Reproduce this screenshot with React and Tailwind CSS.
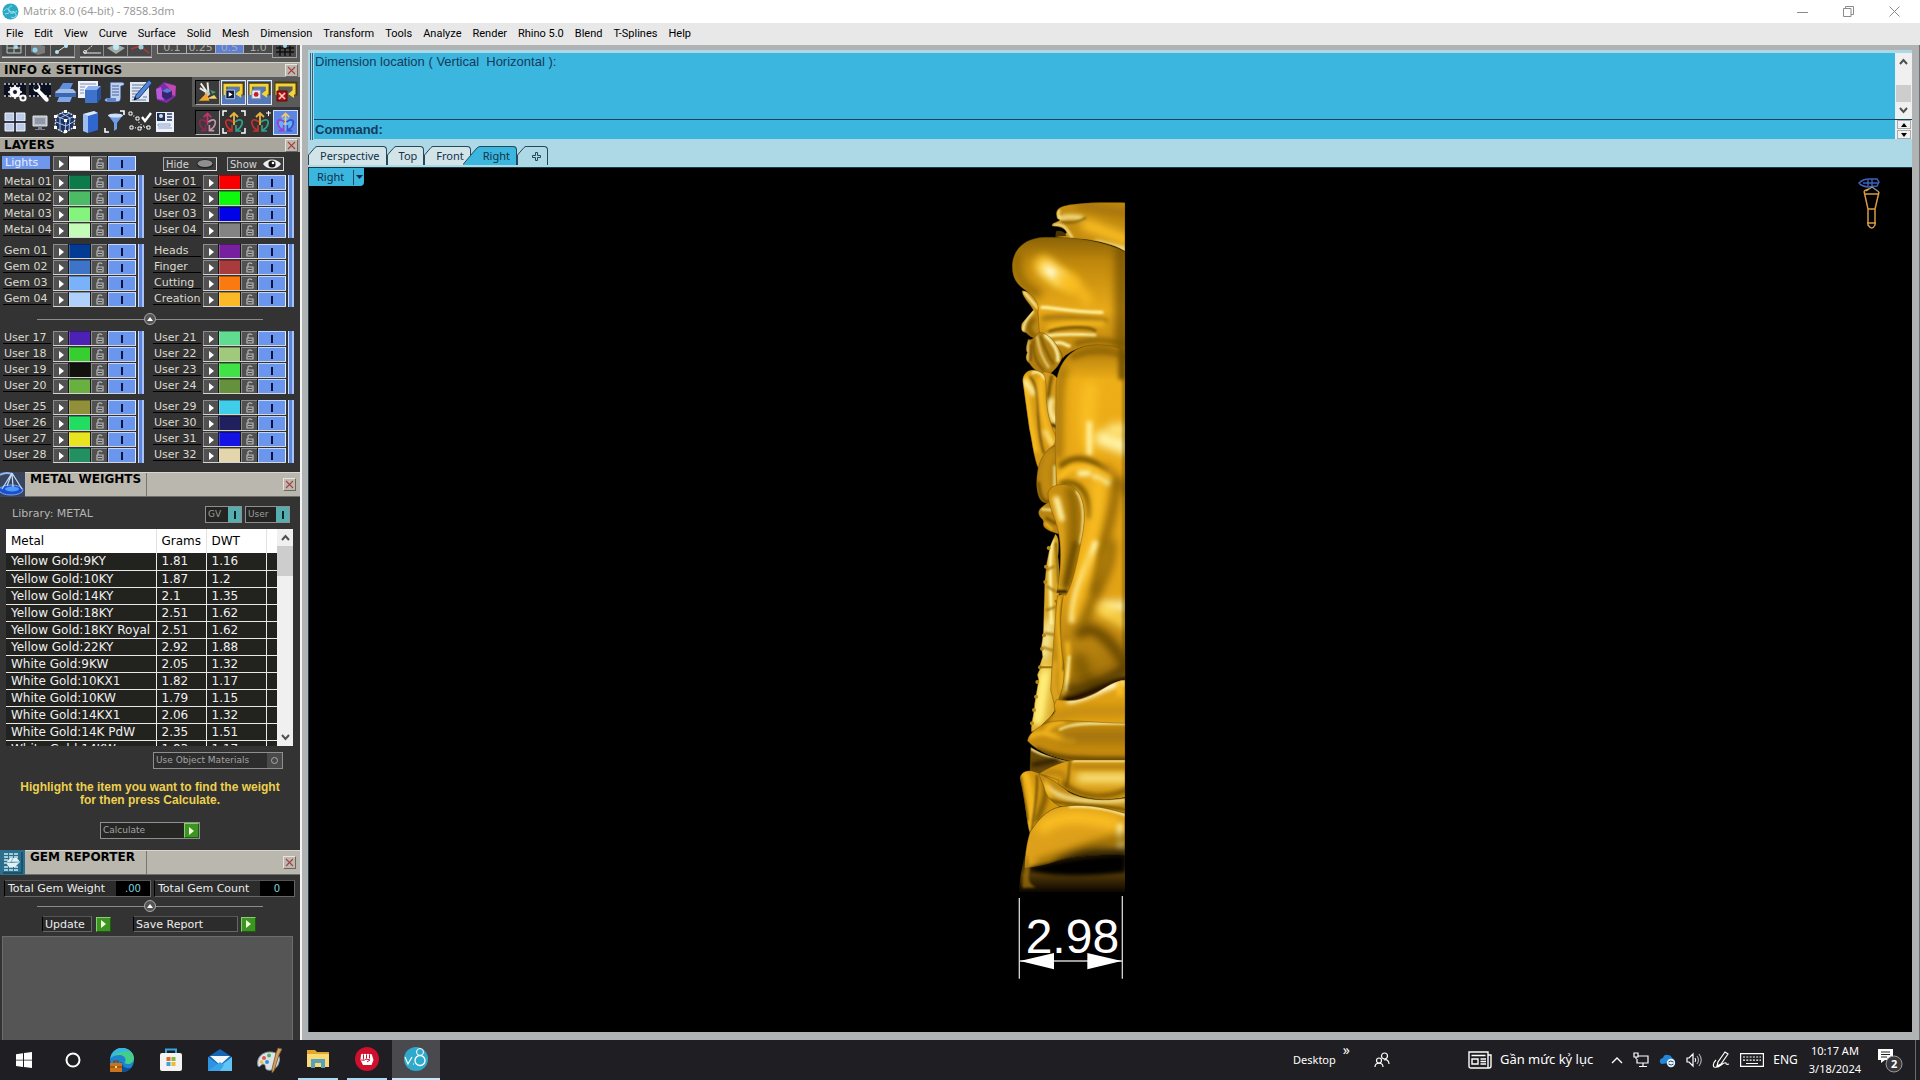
import React from "react";

const ui = "font-['DejaVu_Sans',Verdana,sans-serif]";
const segoe = "font-['Noto_Sans','Segoe_UI',sans-serif]";
const arial = "font-['Liberation_Sans',Arial,sans-serif]";

const MENU = ["File", "Edit", "View", "Curve", "Surface", "Solid", "Mesh", "Dimension", "Transform", "Tools", "Analyze", "Render", "Rhino 5.0", "Blend", "T-Splines", "Help"];

const GROUPS_TOP = [
  [["Metal 01", "#0d7a4c"], ["Metal 02", "#4cbb66"], ["Metal 03", "#84f57c"], ["Metal 04", "#c2fcb6"]],
  [["User 01", "#f80000"], ["User 02", "#0cf90c"], ["User 03", "#0202e8"], ["User 04", "#838383"]],
  [["Gem 01", "#033a94"], ["Gem 02", "#3d74c8"], ["Gem 03", "#79b2f8"], ["Gem 04", "#aed0fb"]],
  [["Heads", "#77209f"], ["Finger", "#a83c3c"], ["Cutting", "#fa7a10"], ["Creation", "#fbb829"]],
];
const GROUPS_BOTTOM = [
  [["User 17", "#4c22b4"], ["User 18", "#36cf2f"], ["User 19", "#11110d"], ["User 20", "#68b040"]],
  [["User 21", "#5fdc90"], ["User 22", "#a0c97c"], ["User 23", "#40e345"], ["User 24", "#66913c"]],
  [["User 25", "#90903a"], ["User 26", "#22dd62"], ["User 27", "#e8e422"], ["User 28", "#229060"]],
  [["User 29", "#40cdea"], ["User 30", "#20205e"], ["User 31", "#1512e4"], ["User 32", "#e4d6ac"]],
];

const METALS = [
  ["Yellow Gold:9KY", "1.81", "1.16"],
  ["Yellow Gold:10KY", "1.87", "1.2"],
  ["Yellow Gold:14KY", "2.1", "1.35"],
  ["Yellow Gold:18KY", "2.51", "1.62"],
  ["Yellow Gold:18KY Royal", "2.51", "1.62"],
  ["Yellow Gold:22KY", "2.92", "1.88"],
  ["White Gold:9KW", "2.05", "1.32"],
  ["White Gold:10KX1", "1.82", "1.17"],
  ["White Gold:10KW", "1.79", "1.15"],
  ["White Gold:14KX1", "2.06", "1.32"],
  ["White Gold:14K PdW", "2.35", "1.51"],
  ["White Gold:14KW", "1.83", "1.17"],
];

function CloseBox() {
  return (
    <button aria-label="Close panel" className="flex h-[13px] w-[13px] shrink-0 items-center justify-center border border-t-[#e8e5de] border-l-[#e8e5de] border-r-[#6a6860] border-b-[#6a6860] bg-[#bdb9b0]">
      <svg width="9" height="9" viewBox="0 0 9 9" stroke="#a84040" strokeWidth="1.1"><path d="M1 1l7 7M8 1l-7 7" /></svg>
    </button>
  );
}

function SlimHeader({ title }) {
  return (
    <div className="flex h-[15px] shrink-0 items-center justify-between border-t border-[#d6d3cb] bg-[#a9a69d] pl-1 pr-0.5">
      <h2 className="text-[12px] leading-[14px] font-bold text-black">{title}</h2>
      <CloseBox />
    </div>
  );
}

function TallHeader({ title, icon }) {
  return (
    <div className="flex h-[25px] shrink-0 bg-[#bab7ae]">
      <div className="h-full w-[25px]">{icon}</div>
      <div className="flex flex-1 items-center border-t border-b border-t-[#d8d6ce] border-b-[#6f6e68] pr-1">
        <h2 className="h-full w-[122px] border-r border-[#77756e] pl-[5px] text-[12px] leading-[13px] font-bold whitespace-nowrap text-black">{title}</h2>
        <span className="ml-auto"><CloseBox /></span>
      </div>
    </div>
  );
}

const C = ({ children }) => (
  <svg width="24" height="24" viewBox="0 0 24 24" fill="none" aria-hidden="true">{children}</svg>
);

const film = (
  <>
    <path d="M1 3h22v14H1z" fill="#0b1020" />
    <path d="M1 4h22M1 16h22" stroke="#c8cde0" strokeWidth="1.6" strokeDasharray="2 2" />
  </>
);
const ARROWS = (a, b, c) => (
  <>
    <path d="M12 15V3M8 7l4-4 4 4" stroke={a} strokeWidth="1.8" />
    <path d="M11 12C6 8 3 10 4 14s3 5 5 6M10 15v6H5" stroke={b} strokeWidth="1.7" />
    <path d="M13 12c5-4 8-2 7 2s-3 5-5 6M14 15v6h5" stroke={c} strokeWidth="1.7" />
  </>
);
const LOOP = (
  <>
    <path d="M3 15V4h18v9h-4" stroke="#4b3a10" strokeWidth="5" />
    <path d="M3 15V5h17v8h-3" stroke="#f1d43a" strokeWidth="3" />
    <path d="M14 14l6-5v9z" fill="#f1d43a" />
  </>
);

const ICONS1 = [
  ["Render settings", <C>{film}<circle cx="12" cy="12" r="4" stroke="#fff" strokeWidth="3.2" /><path d="M12 5v14M5 12h14M7 7l10 10M17 7L7 17" stroke="#fff" strokeWidth="1.6" /><circle cx="12" cy="12" r="2" fill="#10182c" /><circle cx="20" cy="18" r="2.6" stroke="#fff" strokeWidth="2" /></C>],
  ["Options", <C>{film}<path d="M8 5c-4 2-3 7 1 7l8 9c2 2 5 0 3-3l-8-8c1-3 0-5-2-6l1 4-3 2-3-2z" fill="#fff" /></C>],
  ["Printer", <C><path d="M4 12l6-9h10l-4 9z" fill="#5f90dd" /><path d="M2 12l4-3h14l3 3-3 5H5z" fill="#9fbbe8" /><path d="M2 13h21v4H2z" fill="#3d65b0" /><path d="M6 17h13l-2 5H4z" fill="#7fa6e6" /></C>],
  ["Object info", <C><path d="M0 1h20v17H0z" fill="#eef2fa" /><path d="M2 4h16M2 7h5M2 10h4M2 13h4" stroke="#7f8fb4" /><path d="M7 10l4-4h12v12l-4 5H7z" fill="#3e73cc" /><path d="M7 10l4-4h12l-4 4z" fill="#8cb1ee" /><path d="M19 10l4-4v12l-4 5z" fill="#27509d" /></C>],
  ["Notes", <C><path d="M7 2h12c3 0 3 4 0 4h-1v12c0 3-2 4-4 4H4c-3 0-3-4 0-4h3z" fill="#bfd0ee" stroke="#253a66" /><path d="M9 6h7M9 9h7M9 12h7M9 15h7" stroke="#44609c" /><path d="M3 18h10v3H4z" fill="#5b86cf" /></C>],
  ["Edit notes", <C><path d="M2 2h19v20H2z" fill="#dfe8f6" /><path d="M4 5h14M4 8h9M4 11h8M4 14h5M4 17h4M15 17h4M4 20h14" stroke="#6a7896" strokeWidth="1.2" /><path d="M21 0l3 3-13 15-5 2 2-5z" fill="#4f86da" stroke="#1e3a72" /><path d="M6 20l1-3 2 2z" fill="#111" /></C>],
  ["Gem tools", <C><path d="M3 9l8-7 11 3 1 11-9 7-10-3z" fill="#7d2ba8" /><path d="M3 9l5-2 3 13-7-1z" fill="#b55bd8" /><path d="M11 3l5 5-1 5 7 3 1-10z" fill="#c04aae" /><path d="M9 11l5-3 5 3v6l-6 3-4-3z" fill="#37266e" /><path d="M9 11l5-3 5 3-5 2z" fill="#5c7ad8" /></C>],
];
const ICONS2 = [
  ["Viewport layout", <C><path d="M2 3h9v8H2zM13 3h9v8h-9zM2 13h9v8H2zM13 13h9v8h-9z" fill="#bccbe8" stroke="#f1f4fb" /><path d="M12 2v21M1 12h22" stroke="#1c2230" strokeWidth="1.4" /></C>],
  ["Screen", <C><path d="M5 6h14v10H5z" fill="#b7bcc6" stroke="#dfe2e8" /><path d="M7 8h10v6H7z" fill="#8f97a8" /><path d="M10 16h4v3h-4zM7 19h10v1H7z" fill="#7c8190" /></C>],
  ["Mesh cube", <C><path d="M12 1l10 5-1 11-9 6-10-5 1-12z" fill="#1d315f" stroke="#d3ddf3" strokeWidth="1.3" strokeDasharray="2 1" /><path d="M3 6l10 4 9-4M13 10l-1 13M3 12l10 4 9-5M8 3l9 5-1 12M17 3L7 8v13" stroke="#a9c0ee" /><path d="M11 0h3v3h-3zM1 5h3v3H1zM20 5h3v3h-3zM11 20h3v3h-3zM1 16h3v3H1zM20 16h3v3h-3zM11 9h3v3h-3z" fill="#fff" /></C>],
  ["Library", <C><path d="M5 4l11-3 4 2v17l-10 3-5-2z" fill="#2f66d0" /><path d="M5 4l5 2v17l-5-2z" fill="#9cbcf2" /><path d="M5 4l11-3 4 2-10 3z" fill="#dbe6fa" /></C>],
  ["Filter", <C><path d="M5 5h15l-6 8v6l-3 2v-8z" fill="#6f9ee4" /><ellipse cx="12.500" cy="5.500" rx="7.500" ry="2" fill="#cfe0fa" /><path d="M21 5V1h-4M2 18v4h4" stroke="#fff" strokeWidth="1.6" /></C>],
  ["Snap points", <C><path d="M3 4l7 5M4 18l16-1M10 9c0 4 4 7 9 8" stroke="#fff" strokeDasharray="1 2" strokeWidth="1.2" /><path d="M1 2h3v3H1zM8 7h3v3H8zM2 16h3v3H2zM10 17h3v3h-3zM19 16h3v3h-3z" fill="#222" stroke="#fff" /><path d="M14 7l3 4 6-8" stroke="#fff" strokeWidth="2.400" /></C>],
  ["Report", <C><path d="M3 2h18v20H3z" fill="#edf2fa" /><path d="M4 3h8v8H4z" fill="#203055" /><circle cx="8" cy="6" r="2" fill="#cfdaf0" /><path d="M14 4h5M14 7h5M14 10h5" stroke="#2d3d66" strokeWidth="1.500" /><path d="M5 14h12v2H5zM5 18h14" stroke="#8ea4cc" /></C>],
];
const PRESS1 = [
  ["Clean up", "border border-t-black border-l-black border-r-[#aaa] border-b-[#aaa] bg-[#3b3b3b]", <C><path d="M5 3l7 10M12 2l1 10M4 8l8 5" stroke="#ecebe6" strokeWidth="2" /><path d="M12 9l3 5-3 3-3-3z" fill="#c9c9c9" /><path d="M3 21l8-8 3 8z" fill="#f2a72c" /><path d="M11 19h11l-3-4z" fill="#f7d068" /><path d="M15 10l6 2-4 2z" fill="#3ea06a" /></C>],
  ["Play loop", "border border-[#e3ebfb] bg-[#5478b8]", <C>{LOOP}<path d="M4 10h9v9H4z" fill="#0f1a30" stroke="#b9cdf0" /><path d="M7 12l4 2.500-4 2.500z" fill="#fff" /></C>],
  ["Record loop", "border border-[#e3ebfb] bg-[#5478b8]", <C>{LOOP}<path d="M4 10h9v9H4z" fill="#e8eaf0" stroke="#8595b5" /><circle cx="8.500" cy="14.500" r="2.500" fill="#c61d2c" /></C>],
  ["Stop loop", "", <C>{LOOP}<path d="M3 11h10v10H3z" fill="#b21212" stroke="#5a0808" /><path d="M5 13l6 6M11 13l-6 6" stroke="#f7d0c8" strokeWidth="1.600" /></C>],
];
const PRESS2 = [
  ["Move", "border border-t-black border-l-black border-r-[#bbb] border-b-[#bbb] bg-[#3b3b3b]", <C>{ARROWS("#c6326f", "#8e2554", "#c895ac")}</C>],
  ["Move all axes", "", <C>{ARROWS("#e7b43e", "#c82f2f", "#31a08a")}<path d="M1 6V1h4M19 1h4v5M1 18v5h4M19 23h4v-5" stroke="#fff" strokeWidth="1.500" /></C>],
  ["Scale axes", "", <C>{ARROWS("#e7b43e", "#c82f2f", "#31a08a")}<path d="M18 3h5M20.500 1v5" stroke="#fff" /></C>],
  ["Rotate axes", "border border-[#cfe0fb] bg-[#5d86e2]", <C><circle cx="12" cy="14" r="7" fill="#64b4f2" />{ARROWS("#f3c970", "#a23ad0", "#3b4fd0")}</C>],
];

function IconButton({ label, cls, children }) {
  return (
    <button aria-label={label} className={"flex h-[25px] w-[25px] items-center justify-center " + (cls || "")}>{children}</button>
  );
}

function TopStrip() {
  const cell = "flex h-full flex-1 items-end justify-center border-r border-b border-[#8c8c8c] bg-[#484848]";
  return (
    <div className="flex h-[17px] shrink-0 bg-[#5a5a5a] pb-[4px]">
      <div className="ml-0.5 flex w-[73px] border-b border-[#ccc]">
        <button aria-label="Grid snap" className={cell}><svg width="18" height="12" viewBox="0 0 18 12" stroke="#b8c7c7" fill="none"><path d="M2 0v9h14V0M2 4h14M9 0v9" /><circle cx="11" cy="3" r="2" fill="#9fe0f4" stroke="none" /></svg></button>
        <button aria-label="Object snap" className={cell}><svg width="18" height="12" viewBox="0 0 18 12"><path d="M2 1l6-1 8 2v7l-7 2-7-3z" fill="#7a7a7a" /><circle cx="6" cy="6" r="2.500" fill="#8ad4ee" /></svg></button>
        <button aria-label="End snap" className={cell}><svg width="18" height="12" viewBox="0 0 18 12"><path d="M4 8L14 1" stroke="#ddd" /><circle cx="4" cy="8" r="2" fill="#aee4f4" /><circle cx="13" cy="2" r="2" fill="#aee4f4" /></svg></button>
      </div>
      <div className="ml-[5px] flex w-[72px] border-b border-[#ccc]">
        <button aria-label="Angle snap" className={cell}><svg width="20" height="12" viewBox="0 0 20 12" stroke="#e8e8e8" fill="none"><path d="M2 9L12 0" strokeDasharray="2 1" /><path d="M3 9h16" /><circle cx="3" cy="8" r="1.500" /></svg></button>
        <button aria-label="Plane snap" className={cell}><svg width="20" height="12" viewBox="0 0 20 12"><path d="M1 4l9-4 9 4-9 6z" fill="#a4aaa4" /><circle cx="10" cy="3" r="3" fill="#b9ecfa" /></svg></button>
        <button aria-label="Curve snap" className={cell}><svg width="20" height="12" viewBox="0 0 20 12"><path d="M1 5l9-3 9 7" stroke="#bb3b30" strokeWidth="1.500" fill="none" /><circle cx="11" cy="3" r="2.500" fill="#9bd0e4" /></svg></button>
      </div>
      <div className="ml-[5px] flex w-[115px] text-[11px] text-[#a9a9a9]">
        {["0.1", "0.25", "0.5", "1.0"].map((v) => (
          <button key={v} className={"flex h-[9px] flex-1 items-end justify-center overflow-hidden border-b border-l border-[#b0b0b0] leading-[11px] " + (v === "0.5" ? "bg-[#5d80d6]" : "bg-[#4a4a4a]")}>{v}</button>
        ))}
      </div>
      <button aria-label="Grid" className="flex w-[25px] items-end justify-center border border-t-0 border-[#a0a0a0] bg-[#4a4a4a]">
        <svg width="20" height="12" viewBox="0 0 20 12" stroke="#111" strokeWidth="1.500" fill="none"><path d="M1 3h18M1 7h18M5 1v10M10 1v10M15 1v10" /><circle cx="10" cy="1" r="2" fill="#9ad4ea" stroke="none" /></svg>
      </button>
    </div>
  );
}

const bevel = "border border-t-[#a9a9a9] border-l-[#a9a9a9] border-r-[#d9d9d9] border-b-[#e6e6e6]";

function RowButtons({ name, color }) {
  return (
    <div className="flex h-[15px] w-[83px] border-b border-[#d5d5d5] bg-[#181818]">
      <button aria-label={name + " menu"} className="flex w-[15px] items-center justify-center border-t border-l border-[#8d8d8d] bg-[#515151]">
        <svg width="5" height="8" viewBox="0 0 5 8"><path d="M0 0l5 4-5 4z" fill="#fff" /></svg>
      </button>
      <button aria-label={name + " colour"} className="mx-px w-[21px] border-t border-l border-t-black/30 border-l-white/20" style={{ backgroundColor: color }} />
      <button aria-label={name + " lock"} className="flex w-[16px] items-center justify-center border-t border-l border-[#8d8d8d] bg-[#515151]">
        <svg width="8" height="11" viewBox="0 0 8 11" fill="none" stroke="#b9b9b9" strokeWidth="1.200"><path d="M2 5V2c0-1.500 3.500-1.500 4 0M1 5h6v5H1zM2 7.500h4" /></svg>
      </button>
      <button aria-label={name + " visible"} className="ml-px flex flex-1 items-center justify-center border border-b-0 border-l-[#a8c0f6] border-t-[#c5d6fb] border-r-[#e5ecfd] bg-[#6a96ee]">
        <span className="h-2 w-0.5 bg-[#0b1440]" />
      </button>
    </div>
  );
}

function Group({ rows }) {
  return (
    <div className="flex w-[150px]">
      <div className="flex flex-col gap-px">
        {rows.map(([n, c]) => (
          <div key={n} className="flex h-[15px] items-start">
            <span className="ml-[3px] h-[13px] w-[48px] border-b border-black pl-px text-[11px] leading-[13px] whitespace-nowrap text-[#dcd9ce]">{n}</span>
            <span className="ml-[2px]"><RowButtons name={n} color={c} /></span>
          </div>
        ))}
      </div>
      <span className="ml-[2px] w-[6px] border-r-2 border-l border-r-[#a9c1f6] border-l-[#cfdcfb] bg-[#5c86dc]" />
    </div>
  );
}

function Divider() {
  return (
    <div className="flex h-[12px] items-center px-[37px]">
      <span className="h-px flex-1 bg-[#8b8b8b]" />
      <button aria-label="Collapse" className="flex h-[12px] w-[12px] items-center justify-center rounded-full border border-[#a9a9a9] bg-[#555]">
        <svg width="6" height="4" viewBox="0 0 6 4"><path d="M0 4l3-4 3 4z" fill="#fff" /></svg>
      </button>
      <span className="h-px flex-1 bg-[#8b8b8b]" />
    </div>
  );
}

function Go({ label, text }) {
  return (
    <button aria-label={label} className="flex items-center">
      {text}
      <span className="flex h-[15px] w-[15px] items-center justify-center border border-t-[#86cf6c] border-l-[#86cf6c] border-r-[#1e5d10] border-b-[#1e5d10] bg-[#3d9423]">
        <svg width="5" height="8" viewBox="0 0 5 8"><path d="M0 0l5 4-5 4z" fill="#f2ffd8" /></svg>
      </span>
    </button>
  );
}

const Chevron = ({ up }) => (
  <svg width="9" height="7" viewBox="0 0 9 7" fill="none" stroke="#505050" strokeWidth="2">{up ? <path d="M1 6l3.500-4 3.500 4" /> : <path d="M1 1l3.500 4 3.500-4" />}</svg>
);

function MetalWeights() {
  return (
    <>
      <div className="mt-[8px] flex h-[19px] items-center pr-[10px] pl-3">
        <span className="text-[11px] text-[#b5b5b5]">Library: METAL</span>
        {["GV", "User"].map((t) => (
          <button key={t} className={"flex h-[17px] items-center justify-between border border-[#8f8f8f] bg-[#242422] pl-0.5 text-[9px] text-[#9d9d9d] " + (t === "GV" ? "ml-auto w-[37px]" : "ml-[3px] w-[45px]")}>
            {t}
            <span className="flex h-[15px] w-[13px] items-center justify-center bg-[#57aeb0]"><span className="h-2 w-0.5 bg-[#07292b]" /></span>
          </button>
        ))}
      </div>
      <div className="mt-[5px] mr-[7px] ml-1.5 flex h-[217px] shrink-0 overflow-hidden">
        <div className="flex-1 overflow-hidden">
          <table className="w-full table-fixed border-collapse text-left text-[12px]">
            <colgroup><col className="w-[150px]" /><col className="w-[50px]" /><col className="w-[60px]" /><col /></colgroup>
            <thead>
              <tr className="h-[24px] bg-white text-black">
                {["Metal", "Grams", "DWT", ""].map((h, i) => (
                  <th key={i} className="border-r border-[#e2e2e2] p-0 pl-[5px] font-normal last:border-r-0">{h}</th>
                ))}
              </tr>
            </thead>
            <tbody>
              {METALS.map((r) => (
                <tr key={r[0]} className="h-[17px] bg-[#22221e] text-[#f0f0f0]">
                  {[...r, ""].map((c, i) => (
                    <td key={i} className="border-r border-b border-[#e9e9e9] p-0 pl-[5px] leading-4 whitespace-nowrap last:border-r-0">{c}</td>
                  ))}
                </tr>
              ))}
            </tbody>
          </table>
        </div>
        <div className="flex w-[16px] flex-col items-center bg-[#f0f0f0]">
          <button aria-label="Scroll up" className="flex h-[17px] items-center"><Chevron up /></button>
          <span className="h-[30px] w-full bg-[#cdcdcd]" />
          <button aria-label="Scroll down" className="mt-auto flex h-[17px] items-center"><Chevron /></button>
        </div>
      </div>
      <div className="mt-[6px] mr-[17px] flex justify-end">
        <button className="flex h-[17px] w-[130px] items-center justify-between border border-[#8f8f8f] bg-[#2d2d2d] pl-0.5 text-[9px] whitespace-nowrap text-[#a3a3a3]">
          Use Object Materials
          <span className="flex h-[15px] w-[15px] items-center justify-center bg-[#4a4a4a]"><span className="h-[7px] w-[7px] rounded-full border border-[#aaa]" /></span>
        </button>
      </div>
      <p className={"mt-[12px] text-center text-[12px] leading-[13px] font-bold text-[#edd04e] " + arial}>
        Highlight the item you want to find the weight<br />for then press Calculate.
      </p>
      <div className="mt-[15px] flex justify-center">
        <div className="flex h-[17px] w-[100px] items-center border border-[#8f8f8f] bg-[#262624]">
          <Go label="Calculate" text={<span className="w-[83px] pl-0.5 text-left text-[9px] text-[#a3a3a3]">Calculate</span>} />
        </div>
      </div>
    </>
  );
}

function GemReporter() {
  const box = "border border-t-[#555] border-l-black border-r-[#666] border-b-[#666] bg-[#2c2c2c] text-[#ececec] text-[11px] leading-[15px]";
  return (
    <>
      <div className="mt-[5px] flex h-[17px] gap-[3px] pr-[5px] pl-1">
        <div className={"flex flex-1 " + box}>
          <span className="flex-1 pl-[3px] whitespace-nowrap">Total Gem Weight</span>
          <output className="w-[34px] bg-black text-center text-[10px] text-[#7fd0dc]">.00</output>
        </div>
        <div className={"flex w-[141px] " + box}>
          <span className="flex-1 pl-[3px] whitespace-nowrap">Total Gem Count</span>
          <output className="w-[34px] bg-black text-center text-[10px] text-[#7fd0dc]">0</output>
        </div>
      </div>
      <div className="mt-[3px]"><Divider /></div>
      <div className="mt-[4px] flex h-[16px] gap-[22px] pl-[42px]">
        <Go label="Update" text={<span className={"mr-[4px] h-[16px] w-[50px] pl-0.5 text-left " + box}>Update</span>} />
        <Go label="Save Report" text={<span className={"mr-[3px] h-[16px] w-[105px] pl-0.5 text-left " + box}>Save Report</span>} />
      </div>
      <div className="mt-[4px] mr-[7px] ml-0.5 min-h-0 flex-1 border border-b-0 border-[#6c6c6c] bg-[#555]" />
    </>
  );
}

const metalIcon = (
  <svg width="25" height="25" viewBox="0 0 25 25" className="bg-[#39455c]">
    <path d="M0 3c5-3 9-2 12-1" stroke="#8fb6f0" strokeWidth="2" fill="none" />
    <ellipse cx="11" cy="18" rx="12" ry="5" fill="#1b4fd0" stroke="#76a6f6" />
    <ellipse cx="12" cy="17" rx="7" ry="2.500" fill="#4f9bf5" />
    <path d="M12 1L2 17M12 1l10 16M12 1l1 14M12 1L7 14" stroke="#c4dcfa" strokeWidth="1.200" fill="none" />
  </svg>
);
const gemIcon = (
  <svg width="25" height="25" viewBox="0 0 25 25" className="bg-[#2c6f8c]">
    <path d="M4 4h15M4 7h15M4 17h15M4 20h15M4 10h4M4 13h3" stroke="#cdeaf2" strokeWidth="1.500" strokeDasharray="4 1" />
    <path d="M6 13l4-5h7l3 4-5 5H9z" fill="#dff2f8" /><path d="M6 13l5-1 9 0M11 12l2-4" stroke="#88b6cc" />
    <path d="M22 2v21H3" stroke="#174a60" strokeWidth="1.500" fill="none" />
  </svg>
);

function Sidebar() {
  return (
    <aside className={"flex w-[300px] shrink-0 flex-col overflow-hidden bg-[#333] " + ui}>
      <TopStrip />
      <SlimHeader title="INFO &amp; SETTINGS" />
      <div className="flex h-[60px] shrink-0 justify-between pl-[2px]">
        <div className="flex flex-col justify-center gap-[5px]">
          {[ICONS1, ICONS2].map((set, i) => (
            <div key={i} className="flex">{set.map(([l, ic]) => <IconButton key={l} label={l}>{ic}</IconButton>)}</div>
          ))}
        </div>
        <div className="flex flex-col justify-center bg-[#474747]">
          {[PRESS1, PRESS2].map((set, i) => (
            <div key={i} className={"flex h-[30px] items-center gap-px pr-[2px] pl-[3px] " + (i ? "bg-[#333]" : "bg-[#5a5a5a]")}>{set.map(([l, k, ic]) => <IconButton key={l} label={l} cls={k}>{ic}</IconButton>)}</div>
          ))}
        </div>
      </div>
      <SlimHeader title="LAYERS" />
      <div className="mt-[4px] flex h-[16px] items-start">
        <span className="ml-0.5 h-[13px] w-[48px] bg-[#6f97ee] pl-[3px] text-[11px] leading-[13px] text-[#e8eefc]">Lights</span>
        <span className="ml-[3px]"><RowButtons name="Lights" color="#ffffff" /></span>
        <button className={"mt-px ml-[27px] flex h-[14px] w-[54px] items-center justify-between bg-[#3c3c3c] px-0.5 text-[10px] text-[#d5d5d5] " + bevel}>
          Hide<svg width="18" height="10" viewBox="0 0 18 10"><ellipse cx="9" cy="5" rx="8.500" ry="4.500" fill="#222" /><ellipse cx="9" cy="4.500" rx="7.500" ry="3.500" fill="#8f8f8f" /></svg>
        </button>
        <button className={"mt-px ml-[10px] flex h-[14px] w-[57px] items-center justify-between bg-[#3c3c3c] px-0.5 text-[10px] text-[#d5d5d5] " + bevel}>
          Show<svg width="18" height="10" viewBox="0 0 18 10"><path d="M0 5c4-6 14-6 18 0-4 6-14 6-18 0z" fill="#eee" /><circle cx="9" cy="5" r="3.600" fill="#161616" /><circle cx="10" cy="4" r="1.300" fill="#fff" /></svg>
        </button>
      </div>
      <div className="mt-[3px] flex flex-wrap gap-y-[6px]">
        {GROUPS_TOP.map((g, i) => <Group key={i} rows={g} />)}
      </div>
      <div className="mt-[6px]"><Divider /></div>
      <div className="mt-[6px] flex flex-wrap gap-y-[6px]">
        {GROUPS_BOTTOM.map((g, i) => <Group key={i} rows={g} />)}
      </div>
      <div className="mt-[9px]"><TallHeader title="METAL WEIGHTS" icon={metalIcon} /></div>
      <MetalWeights />
      <div className="mt-[11px]"><TallHeader title="GEM REPORTER" icon={gemIcon} /></div>
      <GemReporter />
    </aside>
  );
}

/* A shaded solid: an outline filled with gold, with soft light and dark strokes clipped to it. */
function Solid({ id, d, fill = "#d99b12", soft = [], line = "#5c3f04" }) {
  return (
    <g>
      <clipPath id={id}><path d={d} /></clipPath>
      <path d={d} fill={fill} />
      <g clipPath={"url(#" + id + ")"}>
        {soft.map(([p, color, w, o = 1], i) => (
          <path key={i} d={p} fill="none" stroke={color} strokeWidth={w} strokeLinecap="round" opacity={o} filter={w > 20 ? "url(#b14)" : w > 10 ? "url(#b8)" : "url(#b4)"} />
        ))}
      </g>
      <path d={d} fill="none" stroke={line} strokeWidth="2" opacity=".55" />
    </g>
  );
}

const HI = "#fff3a4";
const MID = "#f9bd22";
const LO = "#7c5806";
const DK = "#2b1d02";

function Statue() {
  return (
    <svg width="180" height="800" viewBox="0 0 540 2400" className="absolute top-[22px] left-[671px]" role="img" aria-label="Side view of half figurine with dimension">
      <defs>
        <filter id="b4" x="0" y="0" width="540" height="2400" filterUnits="userSpaceOnUse"><feGaussianBlur stdDeviation="3" /></filter>
        <filter id="b8" x="0" y="0" width="540" height="2400" filterUnits="userSpaceOnUse"><feGaussianBlur stdDeviation="6" /></filter>
        <filter id="b14" x="0" y="0" width="540" height="2400" filterUnits="userSpaceOnUse"><feGaussianBlur stdDeviation="12" /></filter>
        <linearGradient id="dome" x1="0" y1="0" x2="0" y2="1"><stop offset="0" stopColor="#8a6206" /><stop offset=".2" stopColor="#bf870c" /><stop offset=".6" stopColor="#e9aa19" /><stop offset="1" stopColor="#b07b0a" /></linearGradient>
        <linearGradient id="body" x1="0" y1="0" x2="0" y2="1"><stop offset="0" stopColor="#a87509" /><stop offset=".1" stopColor="#eeae18" /><stop offset=".7" stopColor="#e2a216" /><stop offset="1" stopColor="#8d6307" /></linearGradient>
        <linearGradient id="plinth" x1="0" y1="0" x2="0" y2="1"><stop offset="0" stopColor="#8a6108" /><stop offset=".4" stopColor="#1a1201" /><stop offset=".75" stopColor="#503705" /><stop offset="1" stopColor="#0a0700" /></linearGradient>
      </defs>

      <Solid id="s-top" fill="#c48c10" d="M230 78C225 52 248 46 290 42 340 36 400 38 435 38V184C400 160 330 146 270 146L226 142C236 132 252 138 260 128 254 112 238 110 216 108 214 98 230 98 240 90 232 88 230 84 230 78Z"
        soft={[["M300 45L440 70", "#96690a", 24, .8], ["M320 105L440 150", MID, 36], ["M350 158L440 180", HI, 14], ["M240 86C270 74 290 82 305 84", HI, 12], ["M238 62C230 74 236 80 240 84", HI, 6], ["M245 96C280 102 300 94 316 84", LO, 6], ["M222 106C250 96 262 120 276 142", HI, 7, .9]]} />
      <path d="M228 124q14 -6 28 6l2 8-32 2z" fill="#4a3406" />

      <Solid id="s-nose" fill="#c08a12" d="M126 302C150 300 175 330 182 360L184 440C168 452 150 440 138 428 122 428 122 412 126 400L160 360C150 340 128 324 126 302Z"
        soft={[["M132 306L172 352", HI, 8], ["M158 364C140 388 130 404 130 420", HI, 9], ["M160 390C140 405 146 430 165 440", LO, 14], ["M170 345L188 370", MID, 8]]} />
      <Solid id="s-dome" fill="url(#dome)" d="M97 230C97 178 135 143 195 142 280 140 370 152 435 185V486C400 464 330 460 290 478 270 486 255 496 248 506 240 470 215 448 178 430L174 366C180 340 160 318 136 300 110 284 97 262 97 230Z"
        soft={[["M425 180V480", "#6d4e05", 40, .75], ["M110 200C100 240 120 290 170 310", "#835d06", 30, .8], ["M190 225C215 250 240 268 270 280", MID, 60], ["M200 236C215 248 225 254 236 262", HI, 40], ["M208 244L222 252", "#fffbe0", 14], ["M240 262C280 290 320 310 320 330", MID, 34, .8], ["M186 352C210 350 260 366 366 367", HI, 10], ["M190 385C250 374 340 388 380 392", "#9a6d0a", 12], ["M206 414C240 396 330 400 370 400", MID, 12], ["M208 424C260 408 330 410 345 422", LO, 9], ["M196 438C250 430 300 432 345 436", HI, 9], ["M220 462C245 448 260 470 268 468", HI, 10], ["M290 460C340 445 380 450 430 460", LO, 14, .8]]} />
      <Solid id="s-beard" fill="#b27f12" d="M144 448C156 452 166 440 176 428 204 424 236 466 248 500 238 525 222 545 200 558 176 548 160 540 148 520 136 512 136 498 142 488 134 476 142 462 144 448Z"
        soft={[["M146 456L142 510", HI, 6, .8], ["M160 452C158 490 168 520 190 540", LO, 7], ["M172 440C176 480 190 510 206 532", HI, 6, .8], ["M182 440C196 480 206 500 220 520", LO, 7], ["M196 436C222 460 236 486 234 512", HI, 10], ["M152 462v50", "#51390a", 4]]} />

      <Solid id="s-behind" fill="#d4991a" d="M190 545C215 545 240 560 250 600V800H190L175 600Z"
        soft={[["M215 560C200 620 200 700 215 780", LO, 10], ["M213 632C205 655 212 680 228 694", HI, 18], ["M216 704l20 10", DK, 8]]} />
      <Solid id="s-flute" fill="#d79b16" d="M128 572C130 540 160 530 190 552 202 570 196 600 200 640 206 700 225 730 230 745 222 775 198 782 176 838 160 800 158 760 148 716Z"
        soft={[["M140 565C136 600 146 680 166 780", MID, 18], ["M136 575C140 590 156 588 158 610", HI, 16], ["M150 560C190 600 160 700 192 790", "#3e2b04", 4], ["M182 566C180 620 190 690 215 760", MID, 16], ["M158 548C175 540 188 554 194 566", HI, 8], ["M194 724L216 762", HI, 12, .8]]} />
      <Solid id="s-ball" fill="#a8780c" d="M230 765C190 775 168 826 170 886 172 926 186 946 212 938L246 900V770Z"
        soft={[["M215 790C190 820 190 860 205 910", "#cf9414", 26], ["M224 830V890", HI, 8, .8], ["M176 880C180 925 190 940 210 935", LO, 10]]} />
      <Solid id="s-fingers" fill="#b98511" d="M206 936C190 948 174 956 176 970 178 986 192 986 190 998 186 1014 206 1024 236 1032L244 960Z"
        soft={[["M186 958L216 960", HI, 6], ["M200 985L226 1000", LO, 10], ["M196 1000l20 18", MID, 6]]} />

      <Solid id="s-staff" fill="#d9a827" d="M226 1032C236 1040 238 1060 234 1100 244 1180 236 1230 230 1300 222 1370 216 1440 218 1500L226 1560 186 1616 154 1626C152 1600 162 1580 164 1540L176 1470 172 1454 182 1432 178 1430 188 1400 184 1370 190 1330 194 1180 200 1120 210 1070Z"
        soft={[["M218 1050C206 1100 212 1180 214 1300", HI, 10], ["M208 1300L190 1400", "#fff7b0", 26], ["M198 1440L176 1590", "#ffec74", 36], ["M192 1460L172 1590", "#ffee7a", 18], ["M228 1060L236 1180", LO, 6], ["M198 1140l24-10M202 1190l24 14M200 1260l30-10M196 1330l26 4M190 1372l30 10", "#9a6c0a", 6]]} />
      {[[206, 1074], [198, 1130], [196, 1176], [192, 1336], [186, 1376], [180, 1432], [172, 1476], [168, 1520], [162, 1560], [156, 1600]].map(([x, y]) => (
        <circle key={y} cx={x} cy={y} r="6" fill="#b98a1a" />
      ))}
      <path d="M180 1432l44 0M226 1230l12 24-10 10" stroke="#a0710e" strokeWidth="6" fill="none" />

      <Solid id="s-robeback" fill="#c28c12" d="M232 1216C224 1300 216 1420 212 1500 218 1530 230 1550 222 1580H435V1400L300 1200Z"
        soft={[["M240 1226C226 1310 250 1360 246 1500", MID, 12], ["M250 1226C232 1310 262 1380 250 1440", "#3a2804", 4], ["M226 1420C214 1470 220 1520 240 1540", "#e0a420", 18]]} />
      <Solid id="s-body" fill="url(#body)" d="M228 590C232 520 270 466 350 464 400 464 424 474 435 486V1472C410 1472 380 1490 350 1506 310 1528 270 1536 236 1528 252 1490 258 1440 246 1390 240 1330 240 1270 250 1216L290 1100 230 880 226 780Z"
        soft={[
          ["M425 480V560", LO, 20], ["M250 540C230 600 238 700 234 800", "#8a6107", 22, .9], ["M280 500C330 476 400 480 430 500", LO, 18, .6],
          ["M330 600C320 650 320 700 330 760", MID, 50], ["M328 700V790", HI, 16], ["M370 745L440 770", HI, 50], ["M400 720H440", "#ffe47a", 40],
          ["M244 826C280 796 330 800 374 840", LO, 18], ["M374 836L440 900", "#b17c0b", 30], ["M240 870C250 830 320 810 390 866", MID, 16],
          ["M300 850L325 850M345 860L385 880", HI, 18], ["M245 880C290 868 330 900 330 980", LO, 16], ["M410 880C400 1000 350 1090 340 1200", "#795506", 30, .75], ["M355 880C360 960 330 1060 300 1160", MID, 34],
          ["M345 1060C320 1140 280 1190 276 1290", HI, 18], ["M330 1100C330 1160 296 1200 290 1280", MID, 24], ["M395 1060C400 1150 330 1220 312 1300", LO, 26, .75],
          ["M380 1250H440", HI, 36], ["M370 1260L440 1300", "#ffd94e", 40, .8], ["M300 1330C330 1300 380 1330 440 1430", "#6b4a04", 34], ["M262 1360C270 1420 260 1480 250 1510", MID, 14], ["M268 1400L258 1500", HI, 8],
          ["M300 1410C310 1460 330 1480 340 1480", LO, 40, .8], ["M260 1530C320 1520 370 1480 440 1470", "#090600", 20], ["M270 1500C320 1500 380 1470 430 1440", "#3d2a03", 24, .9],
          ["M431 490V1450", "#6a4b06", 8, .5],
        ]} />
      <Solid id="s-sleeve" fill="#c98f10" d="M204 910C206 884 260 872 286 896 318 926 318 990 304 1050 290 1130 274 1190 258 1216L230 1208C242 1150 246 1080 236 1030 226 980 204 950 204 910Z"
        soft={[["M222 925C250 990 250 1100 244 1200", "#e0a41a", 20], ["M230 928C236 946 240 970 246 985", HI, 18], ["M270 900C292 950 285 1080 260 1180", LO, 24], ["M290 905C316 940 312 1010 300 1060", HI, 6], ["M286 1060L256 1190", "#5b3f04", 14, .8], ["M232 1205h26", DK, 10]]} />

      <Solid id="s-lap" fill="#e0a115" d="M230 1528C270 1540 310 1528 350 1508 380 1490 410 1470 435 1470V1612H180C196 1590 218 1580 226 1562 218 1548 226 1538 230 1528Z"
        soft={[["M270 1534C330 1520 370 1490 425 1478", "#fffad0", 20], ["M420 1480v30", MID, 20], ["M230 1580C300 1550 360 1570 440 1560", "#c48b10", 30], ["M216 1560L190 1610", LO, 14]]} />
      <Solid id="s-knee" fill="#c48a0e" d="M142 1652C148 1626 180 1606 214 1594 290 1588 360 1600 435 1600V1712L280 1716C240 1704 180 1694 142 1652Z"
        soft={[["M240 1618C290 1594 360 1602 440 1600", HI, 8], ["M200 1622C200 1606 230 1600 250 1596", MID, 12], ["M150 1640C200 1610 220 1650 280 1650", MID, 12], ["M260 1640H440", "#9d6f09", 40, .8], ["M170 1680C220 1702 260 1710 440 1708", "#5a3e04", 14]]} />
      <Solid id="s-under" fill="#6a4a06" d="M152 1672C190 1696 240 1710 276 1716L240 1750 170 1754 150 1740Z"
        soft={[["M154 1676C190 1700 230 1700 262 1712", HI, 8], ["M160 1724L230 1710", DK, 14]]} />
      <Solid id="s-foot" fill="#d99c14" d="M176 1752C210 1730 250 1712 286 1710H435V1822C380 1834 310 1830 260 1800 230 1780 210 1764 176 1752Z"
        soft={[["M280 1712H440", HI, 8], ["M190 1750C240 1740 260 1750 262 1790", "#b57f0c", 14], ["M300 1764H440", "#fff08a", 26], ["M280 1730H440", "#b7810c", 14], ["M250 1780C300 1826 380 1826 440 1800", LO, 14], ["M270 1714C264 1740 270 1760 258 1790", LO, 6]]} />
      <Solid id="s-leaf" fill="#d2960f" d="M120 1764C124 1744 140 1742 154 1742L236 1770 240 1860 150 1930C140 1900 138 1840 120 1764Z"
        soft={[["M136 1752C150 1790 160 1850 150 1920", MID, 18], ["M170 1756C176 1800 160 1880 156 1920", "#3c2a04", 4], ["M190 1760C210 1800 190 1850 170 1890", LO, 16], ["M122 1764C124 1810 140 1850 142 1890", "#6a4a05", 6]]} />
      <Solid id="s-band" fill="#c18a12" d="M176 1752C210 1764 240 1784 266 1806 310 1832 380 1834 435 1824V1870L246 1852C220 1840 196 1820 192 1790Z"
        soft={[["M200 1790C230 1820 280 1840 435 1830", HI, 12], ["M196 1778L210 1820", MID, 12], ["M210 1830C260 1850 350 1840 440 1860", LO, 8]]} />
      <path d="M118 2106C118 2070 126 2030 134 1996 142 1960 146 1940 150 1926L200 1900H435V2106Z" fill="url(#plinth)" />
      <Solid id="s-base" fill="#dea01a" line="#000" d="M150 1926C180 1880 210 1850 260 1848 330 1840 390 1858 435 1870V1996C360 1992 280 1998 230 2014 200 2026 160 2034 134 2034 134 1990 142 1950 150 1926Z"
        soft={[["M270 1850C330 1846 400 1860 440 1876", HI, 8], ["M190 1910C240 1870 320 1880 400 1900", MID, 40], ["M420 1910V1970", HI, 20, .8], ["M180 2020C260 2000 330 1960 440 1945", "#8d6306", 24], ["M240 2024C300 1996 340 1986 440 1990", "#000", 26]]} />
      <path d="M140 2036C200 2020 300 2000 435 1996V2046C330 2060 200 2060 140 2036Z" fill="#000" filter="url(#b8)" />
      <path d="M128 2094C124 2070 136 2020 142 1990L150 2036C146 2060 140 2080 170 2092Z" fill="#a3740f" opacity=".7" filter="url(#b4)" />
      <path d="M437 0h103V2400H437zM0 2110h436v40H0z" fill="#000" />

      <g stroke="#cfcfcf" strokeWidth="4">
        <path d="M118 2124V2366M427 2118V2366M118 2313H427" />
      </g>
      <path d="M120 2313L222 2289V2338ZM425 2313L322 2289V2338Z" fill="#fff" />
      <text x="137" y="2288" fontSize="144" fill="#fff" className={arial}>2.98</text>
    </svg>
  );
}

function Tab({ label, active, plus }) {
  const fill = active ? "#3bb6df" : plus ? "#add8e6" : "#d3e4e9";
  return (
    <button className={"flex h-[19px] " + (active ? "z-10 -ml-2" : "")}>
      {active
        ? <svg width="17" height="19" viewBox="0 0 17 19" className="shrink-0"><path d="M0 18.500L13 3q2-2.500 4-2.500V19H0z" fill={fill} /><path d="M0 18.500L13 3q2-2.500 4-2.500" fill="none" stroke="#24495a" /></svg>
        : <svg width="9" height="19" viewBox="0 0 9 19" className="shrink-0"><path d="M.5 19V9L7 1.500Q8 .5 9 .5V19z" fill={fill} /><path d="M.5 19V9L7 1.500Q8 .5 9 .5" fill="none" stroke="#24495a" /></svg>}
      <span className={"flex h-full items-center rounded-tr-[4px] border-t border-r border-[#24495a] text-[#123247] " + (active ? "bg-[#3bb6df] pr-1.5 pl-[3px]" : plus ? "bg-[#add8e6] px-[6px]" : "bg-[#d3e4e9] pr-1.5 pl-[3px]")}>
        {plus ? <svg width="9" height="9" viewBox="0 0 9 9" fill="none" stroke="#24495a"><path d="M3.500.5h2v3h3v2h-3v3h-2v-3h-3v-2h3z" /></svg> : label}
      </span>
    </button>
  );
}

function Workspace() {
  return (
    <main className="flex min-w-0 flex-1 border-l-2 border-[#f4f4f4] bg-[#b0b3b3]">
      <div className="mt-[5px] mb-[8px] ml-[6px] flex min-w-0 flex-1 flex-col bg-[#add8e6]">
        <div className="mt-[3px] ml-[2px] flex h-[87px] border-l border-[#35607c] pl-px">
          <div className="flex flex-1 border-l border-[#35607c] pl-px">
            <div className={"flex h-[86px] flex-1 flex-col bg-[#3bb6df] text-[13px] text-[#153a5a] " + arial}>
              <div className="flex-1 pl-px leading-[18px] whitespace-pre">Dimension location ( Vertical  Horizontal ):</div>
              <label className="flex h-[20px] items-center border-t border-[#17405e] pl-px leading-[18px] font-bold">
                Command:
                <input aria-label="Command" className="ml-1 h-4 flex-1 bg-transparent outline-none" />
              </label>
            </div>
            <div className="flex h-[86px] w-[17px] flex-col bg-[#f0f0f0]">
              <div className="flex flex-1 flex-col items-center">
                <button aria-label="Scroll up" className="flex h-[17px] items-center"><Chevron up /></button>
                <span className="mt-auto h-[17px] w-[15px] bg-[#cdcdcd]" />
                <button aria-label="Scroll down" className="flex h-[17px] items-center"><Chevron /></button>
              </div>
              <div className="flex h-[20px] flex-col items-center gap-px border-t border-[#17405e]">
                <button aria-label="Previous command" className="flex h-[9px] w-[14px] items-center justify-center border border-[#aaa]"><svg width="6" height="4" viewBox="0 0 6 4"><path d="M0 4l3-4 3 4z" /></svg></button>
                <button aria-label="Next command" className="flex h-[9px] w-[14px] items-center justify-center border border-[#aaa]"><svg width="6" height="4" viewBox="0 0 6 4"><path d="M0 0l3 4 3-4z" /></svg></button>
              </div>
            </div>
          </div>
        </div>
        <div className={"mt-[6px] mb-[2px] flex h-[19px] text-[11px] " + segoe}>
          <Tab label="Perspective" /><Tab label="Top" /><Tab label="Front" /><Tab label="Right" active /><Tab plus />
        </div>
        <div className="relative min-h-0 flex-1 overflow-hidden border-t border-l border-[#1d3c4a] bg-black">
          <div className={"flex h-[18px] w-[55px] items-center rounded-br-[4px] bg-[#3bb6df] pl-2 text-[11px] text-[#0f2c48] " + segoe}>
            Right
            <button aria-label="Viewport menu" className="ml-auto flex h-[15px] w-[11px] items-center justify-center border-l border-[#1b4a68]"><svg width="7" height="4" viewBox="0 0 7 4"><path d="M0 0h7L3.500 4z" fill="#0f2c48" /></svg></button>
          </div>
          <svg width="24" height="54" viewBox="0 0 24 54" fill="none" className="absolute top-[9px] right-[30px]" aria-hidden="true">
            <path d="M1 6q4-4 10-4h8l2 3-2 4-9 1Q3 9 1 6zM5 6h15M14 2v8M10 3v6" stroke="#3d62bd" strokeWidth="1.400" />
            <path d="M8 14l6-4 7 5" stroke="#9a9690" strokeWidth="1.400" />
            <path d="M6 14l4 18v16q4 6 7 0V32l4-17M7 17h13M10 32h7M6 14l5-2M9 46h9" stroke="#d89a44" strokeWidth="1.500" />
          </svg>
          <Statue />
        </div>
      </div>
      <div className="w-[8px] border-r border-[#707070]" />
    </main>
  );
}

const TASKS = [
  ["Start", "", <svg width="16" height="16" viewBox="0 0 16 16" fill="#fff"><path d="M0 2.200l7-1v6.500H0zM8 1.100L16 0v7.700H8zM0 8.500h7V15l-7-1zM8 8.500h8V16l-8-1.100z" /></svg>],
  ["Search", "", <svg width="16" height="16" viewBox="0 0 16 16" fill="none" stroke="#fff" strokeWidth="2"><circle cx="8" cy="8" r="6.500" /></svg>],
  ["Edge", "", <svg width="26" height="26" viewBox="0 0 26 26"><circle cx="13" cy="13" r="12" fill="#1c84d0" /><path d="M1.500 11C3 4 8 1 13 1c7 0 12 5 12 10 0 4-3 6-6 6-3 0-4-1-3-2 2-3-1-7-5-7-4 0-8 1-9.500 3z" fill="#43cf8a" /><path d="M1.500 11C3 4 8 1 13 1c4 0 8 2 10 5-6-3-14-2-21.500 5z" fill="#36b7e4" /><path d="M13 15c0 5 5 8 10 5-3 4-7 5-10 5-4-1-7-8 0-10z" fill="#0c4f96" /><path d="M1 16h12v9H1z" fill="#c9741a" /><path d="M5 16v-2h4v2M1 20h12" stroke="#7a3f08" strokeWidth="1.200" fill="none" /><path d="M6 19h2v2H6z" fill="#ffd88a" /></svg>],
  ["Store", "", <svg width="24" height="24" viewBox="0 0 24 24"><path d="M7 6V1.500h10V6" fill="none" stroke="#3aa5de" strokeWidth="2" /><rect x="1" y="5" width="22" height="18" rx="2" fill="#f3f3f3" /><path d="M7.500 9h4v4h-4z" fill="#e0662c" /><path d="M12.500 9h4v4h-4z" fill="#8db63c" /><path d="M7.500 14h4v4h-4z" fill="#3da2d8" /><path d="M12.500 14h4v4h-4z" fill="#f0b93a" /></svg>],
  ["Mail", "", <svg width="24" height="24" viewBox="0 0 24 24"><path d="M0 9L12 1l12 8v14H0z" fill="#1565b4" /><path d="M2 8h20l-10 9z" fill="#f2f6fa" /><path d="M0 9l14 10-8 4H0z" fill="#2e93e0" /><path d="M24 9L5 23h19z" fill="#5fc3f4" /><path d="M0 23L12 14l4 3-4 6z" fill="#3ba4e8" /></svg>],
  ["Paint", "", <svg width="26" height="26" viewBox="0 0 26 26"><path d="M2 19C0 10 7 5 14 5c7 0 11 4 9 10-1 6-7 9-11 8-4 0-1-6-5-6-2 0-3 4-5 2z" fill="#dbe4ea" stroke="#8d9aa2" /><circle cx="8" cy="11" r="2" fill="#e2574c" /><circle cx="13" cy="8.500" r="2" fill="#4ab35b" /><circle cx="5.500" cy="15" r="1.800" fill="#f0c23c" /><circle cx="11" cy="15" r="2" fill="#3b8fd6" /><path d="M20 6l2-5 4 1-3 6-5 16-2 2v-4z" fill="#cfa064" stroke="#7b5424" strokeWidth=".8" /></svg>],
  ["File Explorer", "border-b-2 border-[#a8ddf5]", <svg width="24" height="22" viewBox="0 0 24 22"><path d="M1 2h8l2 2h12v15H1z" fill="#e0a92e" /><path d="M1 6h22v13H1z" fill="#fbd977" /><path d="M5 11h14v9h-4v-5H9v5H5z" fill="#58a2b8" /></svg>],
  ["Red fist app", "border-b-2 border-[#a8ddf5]", <svg width="26" height="26" viewBox="0 0 26 26"><circle cx="13" cy="13" r="12" fill="#ce0f2e" /><path d="M7 8.500q1.500-1.500 2.500 0 1.500-1.500 3 0 1.500-1.500 3 0 2-1 2.500.500l1.500 5-2 5H9l-2.500-5z" fill="#fff" /><path d="M9.500 8.500v5M12.500 8.500v4M15.500 8.500v4M7 14q4 1 5-1l4 1-3 2" stroke="#ce0f2e" fill="none" /></svg>],
  ["Matrix", "border-b-2 border-[#c5e9f8] bg-[#4a4a4e]", <svg width="26" height="26" viewBox="0 0 26 26" fill="none" stroke="#fff"><circle cx="13" cy="13" r="12" fill="#2fa9cc" stroke="none" /><path d="M2 11l3 7 4-7M10 18h1" strokeWidth="1.200" /><circle cx="17" cy="6" r="3.500" /><circle cx="17" cy="14.500" r="5" strokeWidth="1.300" /></svg>],
];

function Taskbar() {
  return (
    <footer className={"flex h-[40px] shrink-0 items-center bg-[#1f1e22] text-white " + segoe}>
      <nav className="flex h-full gap-px">
        {TASKS.map(([l, cls, ic], i) => (
          <button key={l} aria-label={l} className={"flex h-full items-center justify-center " + (i === 6 || i === 7 ? "mx-1 w-[40px] " : "w-[48px] ") + cls}>{ic}</button>
        ))}
      </nav>
      <div className="ml-auto flex h-full items-center text-[12px]">
        <span className="text-[11px]">Desktop</span>
        <button className="mb-[20px] ml-[7px] text-[14px] leading-4" aria-label="More">»</button>
        <button aria-label="People" className="ml-[24px]"><svg width="16" height="16" viewBox="0 0 16 16" fill="none" stroke="#fff" strokeWidth="1.200"><circle cx="10.500" cy="4" r="3" /><circle cx="5" cy="8.500" r="2.500" /><path d="M1 15c0-5 8-5 8 0M10 8c3-1 5 1 5 4" /></svg></button>
        <button className="ml-[78px] flex items-center gap-[8px] text-[13px]">
          <svg width="24" height="18" viewBox="0 0 24 18" fill="none" stroke="#fff" strokeWidth="1.400"><path d="M1 1h19v16H3q-2 0-2-2zM20 4h3v11q0 2-2 2h-2M3.500 4.500h14M4 8h6v5H4zM12.500 8H18M12.500 10.500H18M12.500 13H18" /></svg>
          Gần mức kỷ lục
        </button>
        <div className="ml-[18px] flex items-center gap-[10px]">
          <button aria-label="Show hidden icons"><svg width="12" height="8" viewBox="0 0 12 8" fill="none" stroke="#fff" strokeWidth="1.400"><path d="M1 7l5-5 5 5" /></svg></button>
          <svg width="16" height="16" viewBox="0 0 16 16" fill="none" stroke="#fff" strokeWidth="1.200"><path d="M5 4h10v7H4V7M10 11v3M6 14.500h8M1 1h4v4H1zM3 5v2" /></svg>
          <svg width="17" height="16" viewBox="0 0 17 16"><path d="M3 12q-3-1-2-4 1-2 3-2 1-4 5-3 3 0 4 3 3 1 3 4z" fill="#2385d6" /><circle cx="12" cy="11" r="4.200" fill="#e9f3fb" /><path d="M9.500 10q2-2 5 0M14.500 12q-2 2-5 0" stroke="#246" fill="none" /></svg>
          <svg width="16" height="16" viewBox="0 0 16 16" fill="none" stroke="#fff" strokeWidth="1.200"><path d="M1 6h2l4-4v12l-4-4H1zM9 6q1.500 2 0 4" /><path d="M11 4q3 4 0 8M13 2q4.500 6 0 12" stroke="#aaa" /></svg>
          <svg width="18" height="18" viewBox="0 0 18 18" fill="none" stroke="#fff" strokeWidth="1.200"><path d="M5 15l1-4 7-10 3 2-7 10zM4 9q-4 4-2 7 4 1 7-2 4-3 5-2 0 2 3 1" /></svg>
          <svg width="24" height="14" viewBox="0 0 24 14" fill="none" stroke="#fff" strokeWidth="1.200"><path d="M.6.6h22.800v12.800H.6zM6 10.500h12" /><path d="M3 4h18M3 7.200h18" strokeDasharray="2 1.300" /></svg>
        </div>
        <span className="ml-[9px] text-[12px]">ENG</span>
        <time className="ml-[11px] flex flex-col items-center text-[11px] leading-[18px]"><span>10:17 AM</span><span>3/18/2024</span></time>
        <button aria-label="Notifications" className="ml-[16px]">
          <svg width="26" height="26" viewBox="0 0 26 26"><path d="M1 2h15v11H8l-4 3v-3H1z" fill="#fff" /><path d="M4 5h9M4 7.500h9M4 10h6" stroke="#222" /><circle cx="17" cy="17" r="8" fill="#38383b" stroke="#9a9a9a" /><text x="14" y="21" fontSize="11" fontWeight="bold" fill="#fff">2</text></svg>
        </button>
        <span className="ml-[12px] h-full w-[5px] border-l border-[#6b6b6b]" />
      </div>
    </footer>
  );
}

export default function App() {
  return (
    <div className="flex h-screen w-full flex-col overflow-hidden bg-[#333]">
      <header className={"flex h-[23px] shrink-0 items-center bg-white pl-0.5 " + segoe}>
        <svg width="17" height="17" viewBox="0 0 17 17" fill="none"><circle cx="8.500" cy="8.500" r="8" fill="#2aa8c4" /><path d="M2 8c2-3 4-3 5 0s4 3 8 0M3 11l4-1M10 3a3 3 0 1 0 2 5M9 14a3 3 0 1 0 1-5" stroke="#9ae3ee" /></svg>
        <h1 className="ml-1 text-[11px] text-[#9a9a9a]">Matrix 8.0 (64-bit) - 7858.3dm</h1>
        <div className="ml-auto flex items-center gap-[35px] pr-[20px]">
          <button aria-label="Minimize"><svg width="11" height="10" viewBox="0 0 11 10" stroke="#8a8a8a"><path d="M0 5.500h11" /></svg></button>
          <button aria-label="Restore"><svg width="11" height="11" viewBox="0 0 11 11" stroke="#8a8a8a" fill="none"><path d="M.5 2.500h7.500v8H.5zM2.500 2.500v-2h8v8H8" /></svg></button>
          <button aria-label="Close"><svg width="11" height="11" viewBox="0 0 11 11" stroke="#8a8a8a"><path d="M.5.5l10 10M10.500.5l-10 10" /></svg></button>
        </div>
      </header>
      <nav className="flex h-[22px] shrink-0 items-center gap-[11px] bg-[#e8e8e8] pl-[6px] font-['Roboto',sans-serif] text-[11px] text-black">
        {MENU.map((m) => <button key={m} className="whitespace-nowrap">{m}</button>)}
      </nav>
      <div className="flex min-h-0 flex-1">
        <Sidebar />
        <Workspace />
      </div>
      <Taskbar />
    </div>
  );
}
